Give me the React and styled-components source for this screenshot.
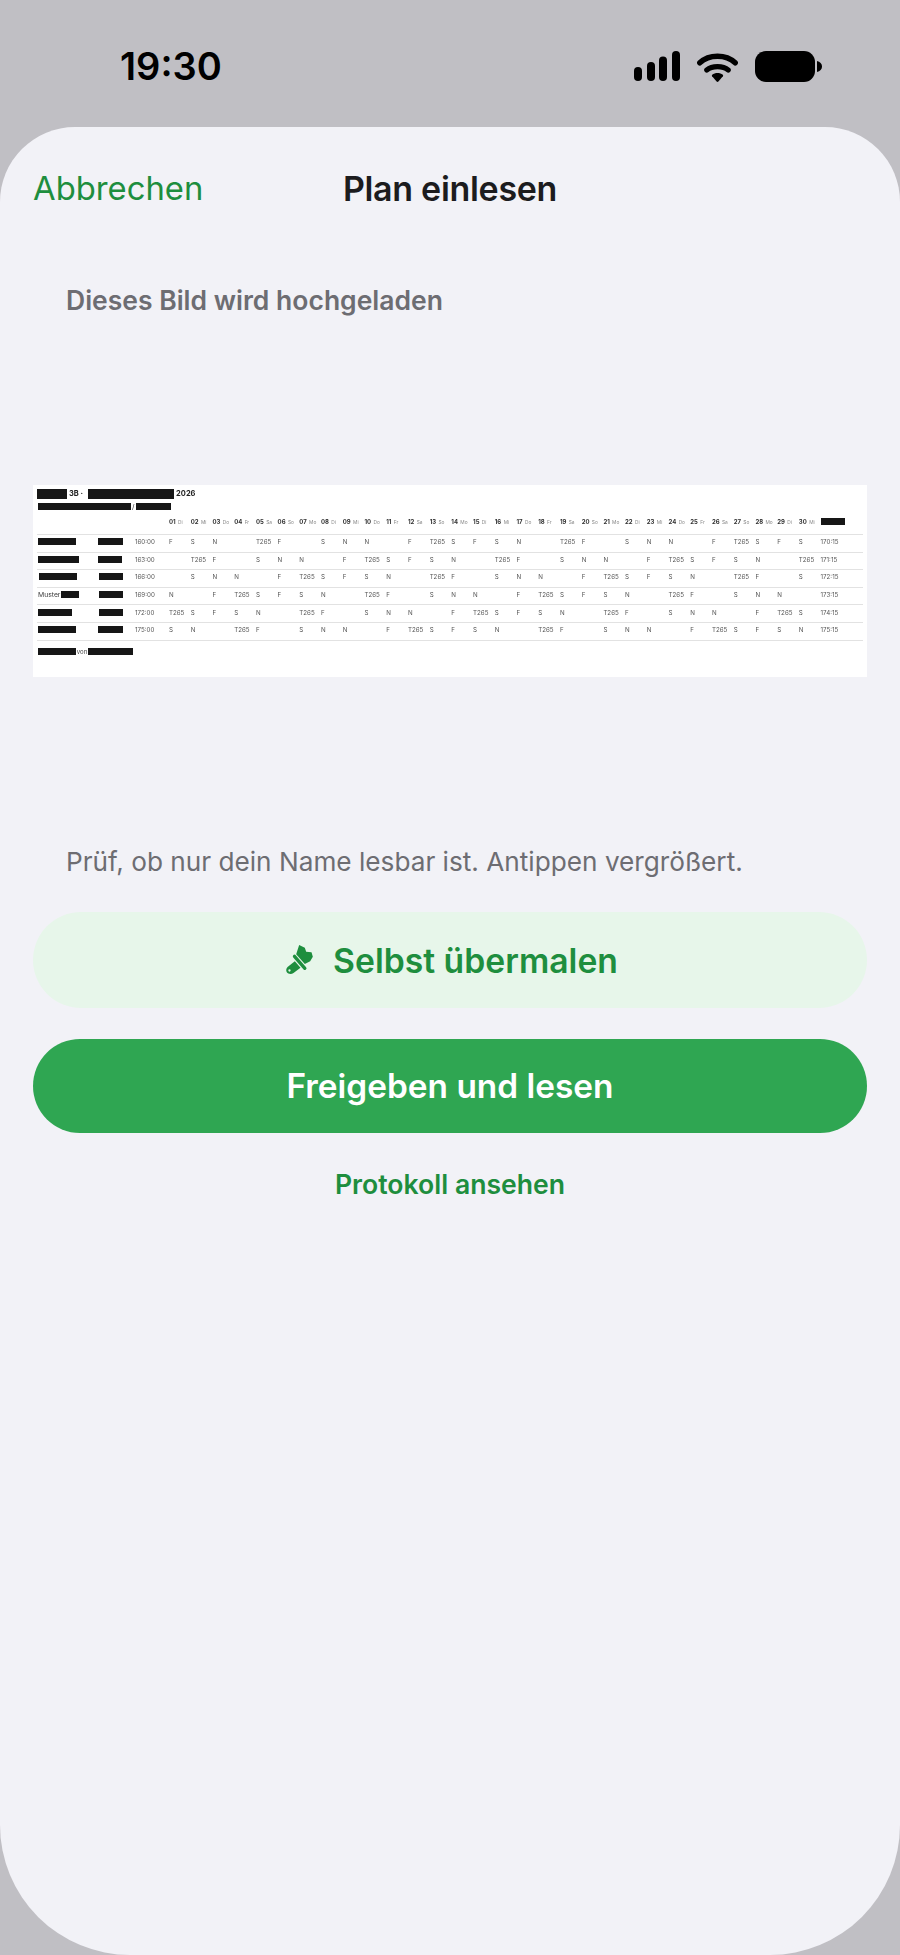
import styled, { createGlobalStyle } from "styled-components"

const green = "#1e8e3e"

const GlobalStyle = createGlobalStyle`
  html, body {
    margin: 0;
    padding: 0;
    background: #c0bfc4;
  }

  * {
    box-sizing: border-box;
  }
`

// Days of the plan, first to thirtieth
const weekdays = ["Di", "Mi", "Do", "Fr", "Sa", "So", "Mo"]
const days = Array.from({ length: 30 }, (_, i) => ({
  num: String(i + 1).padStart(2, "0"),
  name: weekdays[i % 7],
}))

const rows = [
  {
    name: [38, 1],
    group: [0, 25],
    hours: "160:00",
    total: "170:15",
    shifts: "F,S,N,,T265,F,,S,N,N,,F,T265,S,F,S,N,,T265,F,,S,N,N,,F,T265,S,F,S",
  },
  {
    name: [41, 1],
    group: [0, 24],
    hours: "163:00",
    total: "171:15",
    shifts: ",T265,F,,S,N,N,,F,T265,S,F,S,N,,T265,F,,S,N,N,,F,T265,S,F,S,N,,T265",
  },
  {
    name: [38, 2],
    group: [1, 24],
    hours: "166:00",
    total: "172:15",
    shifts: ",S,N,N,,F,T265,S,F,S,N,,T265,F,,S,N,N,,F,T265,S,F,S,N,,T265,F,,S",
  },
  {
    label: "Muster",
    name: [18, 0],
    group: [1, 24],
    hours: "169:00",
    total: "173:15",
    shifts: "N,,F,T265,S,F,S,N,,T265,F,,S,N,N,,F,T265,S,F,S,N,,T265,F,,S,N,N,",
  },
  {
    name: [34, 1],
    group: [1, 24],
    hours: "172:00",
    total: "174:15",
    shifts: "T265,S,F,S,N,,T265,F,,S,N,N,,F,T265,S,F,S,N,,T265,F,,S,N,N,,F,T265,S",
  },
  {
    name: [38, 1],
    group: [0, 25],
    hours: "175:00",
    total: "175:15",
    shifts: "S,N,,T265,F,,S,N,N,,F,T265,S,F,S,N,,T265,F,,S,N,N,,F,T265,S,F,S,N",
  },
]

const SignalIcon = () => (
  <svg width="46" height="30" viewBox="0 0 46 30" fill="#000">
    <rect x="0" y="16" width="8" height="14" rx="4" />
    <rect x="13" y="11" width="8" height="19" rx="4" />
    <rect x="25" y="5.5" width="8" height="24.5" rx="4" />
    <rect x="38" y="0" width="8" height="30" rx="4" />
  </svg>
)

const WifiIcon = () => (
  <svg width="41" height="31" viewBox="0 0 41 31" fill="none">
    <path
      d="M2.8 11.8C12 3 29 3 38.2 11.8"
      stroke="#000"
      strokeWidth="5.4"
      strokeLinecap="round"
    />
    <path
      d="M9.8 19C15 14.6 26 14.6 31.2 19"
      stroke="#000"
      strokeWidth="5.2"
      strokeLinecap="round"
    />
    <path
      d="M15.2 23.8C18 21.4 23 21.4 25.8 23.8C26.2 24.2 26.2 24.8 25.9 25.2L21.4 30.6C20.9 31.1 20.1 31.1 19.6 30.6L15.1 25.2C14.8 24.8 14.8 24.2 15.2 23.8Z"
      fill="#000"
    />
  </svg>
)

const BatteryIcon = () => (
  <svg width="67" height="31" viewBox="0 0 67 31" fill="#000">
    <rect x="0" y="0" width="60" height="31" rx="11" />
    <path d="M62 10C65 10.5 67 12.8 67 15.5C67 18.2 65 20.5 62 21Z" />
  </svg>
)

const BrushIcon = () => (
  <svg width="27" height="30" viewBox="78 75 80 90" fill={green}>
    <path d="M117 75L134 83L138 95L154 97L158 110L150 124L134 132L108 103Z" />
    <path
      d="M103 109L134 145"
      fill="none"
      stroke={green}
      strokeWidth="10"
      strokeLinecap="round"
    />
    <path
      fillRule="evenodd"
      d="M104 124L121 143L100 159C94 164 84 163 80 157C76 150 79 143 85 139ZM88 148A3.5 3.5 0 1 0 88.01 155A3.5 3.5 0 1 0 88 148Z"
    />
  </svg>
)

const PlanPreview = () => (
  <Preview>
    <PlanTitle>
      <Redact $w={30} $h={10} />
      3B ·
      <Redact $w={86} $h={10} $ml={3} />
      2026
    </PlanTitle>
    <PlanSubtitle>
      <Redact $w={93} />/
      <Redact $w={35} />
    </PlanSubtitle>
    <PlanHead>
      <span />
      <span />
      <span />
      {days.map((day) => (
        <Day key={day.num}>
          <b>{day.num}</b> {day.name}
        </Day>
      ))}
      <Redact $w={24} />
    </PlanHead>
    <PlanBody>
      {rows.map((row) => (
        <PlanRow key={row.hours}>
          <Cell>
            {row.label && <SampleName>{row.label}</SampleName>}
            <Redact $w={row.name[0]} $ml={row.name[1]} />
          </Cell>
          <Cell>
            <Redact $w={row.group[1]} $ml={row.group[0]} />
          </Cell>
          <Cell>{row.hours}</Cell>
          {row.shifts.split(",").map((shift, i) => (
            <Cell key={i}>{shift}</Cell>
          ))}
          <Cell>{row.total}</Cell>
        </PlanRow>
      ))}
    </PlanBody>
    <PlanFooter>
      <Redact $w={38} $ml={1} />
      <FooterWord>von</FooterWord>
      <Redact $w={45} />
    </PlanFooter>
  </Preview>
)

export default function App() {
  return (
    <>
      <GlobalStyle />
      <Page>
        <StatusBar>
          <Time>19:30</Time>
          <StatusIcons>
            <SignalIcon />
            <WifiIcon />
            <BatteryIcon />
          </StatusIcons>
        </StatusBar>
        <Sheet>
          <Nav>
            <Cancel>Abbrechen</Cancel>
            <Title>Plan einlesen</Title>
          </Nav>
          <SectionLabel>Dieses Bild wird hochgeladen</SectionLabel>
          <PlanPreview />
          <Caption>Prüf, ob nur dein Name lesbar ist. Antippen vergrößert.</Caption>
          <SoftButton>
            <BrushIcon />
            Selbst übermalen
          </SoftButton>
          <SolidButton>Freigeben und lesen</SolidButton>
          <TextLink>Protokoll ansehen</TextLink>
        </Sheet>
      </Page>
    </>
  )
}

const Page = styled.div`
  width: 900px;
  height: 1955px;
  display: flex;
  flex-direction: column;
  background: #c0bfc4;
  font-family: Inter, "Liberation Sans", sans-serif;
`

const StatusBar = styled.div`
  height: 127px;
  flex: none;
  display: flex;
  align-items: center;
  justify-content: space-between;
  padding: 5px 78px 0 120px;
`

const Time = styled.div`
  font-size: 38px;
  font-weight: 600;
  color: #000;
`

const StatusIcons = styled.div`
  display: flex;
  align-items: center;
  gap: 17px;
`

const Sheet = styled.div`
  flex: 1;
  display: flex;
  flex-direction: column;
  padding: 0 33px;
  background: #f2f2f7;
  border-radius: 75px 75px 130px 130px;
`

const Nav = styled.div`
  height: 50px;
  margin-top: 36px;
  display: grid;
  grid-template-columns: 1fr auto 1fr;
  align-items: center;
`

const Cancel = styled.div`
  font-size: 32.8px;
  color: ${green};
`

const Title = styled.div`
  font-size: 34px;
  font-weight: 600;
  letter-spacing: -0.3px;
  color: #1c1c1e;
`

const SectionLabel = styled.div`
  margin-top: 71px;
  padding-left: 33px;
  font-size: 26.5px;
  line-height: 32px;
  font-weight: 600;
  color: #6d6d72;
`

const Preview = styled.div`
  height: 192px;
  margin-top: 169px;
  padding: 3px 4px 0;
  background: #fff;
  color: #555;
  font-size: 6px;
  filter: blur(0.3px);
  overflow: hidden;
`

const Redact = styled.i`
  display: inline-block;
  flex: none;
  width: ${({ $w }) => $w}px;
  height: ${({ $h }) => $h || 7}px;
  margin-left: ${({ $ml }) => $ml || 0}px;
  background: #161616;
`

const PlanTitle = styled.div`
  height: 11px;
  display: flex;
  align-items: center;
  gap: 2px;
  font-size: 7.5px;
  font-weight: 700;
  color: #222;
`

const PlanSubtitle = styled.div`
  height: 8px;
  margin-top: 3px;
  padding-left: 1px;
  display: flex;
  align-items: center;
  gap: 1px;
  font-size: 7px;
  color: #333;
`

const columns = "61px 37px 34px repeat(30, 21.73px) 1fr"

const PlanHead = styled.div`
  height: 10px;
  margin: 6px 0 8px;
  display: grid;
  grid-template-columns: ${columns};
  align-items: center;
`

const Day = styled.span`
  font-size: 4.8px;
  color: #888;
  white-space: nowrap;

  b {
    font-size: 6px;
    font-weight: 700;
    color: #333;
    margin-right: 1px;
  }
`

const PlanBody = styled.div`
  border-top: 1px solid #e2e2e2;
`

const PlanRow = styled.div`
  height: 17.6px;
  padding-bottom: 3px;
  display: grid;
  grid-template-columns: ${columns};
  align-items: center;
  border-bottom: 1px solid #e2e2e2;
`

const Cell = styled.span`
  display: flex;
  align-items: center;
  white-space: nowrap;
  font-size: 6.2px;
  color: #555;
`

const SampleName = styled.span`
  width: 23px;
  margin-left: 1px;
  font-size: 6.8px;
  color: #3a3a3a;
`

const PlanFooter = styled.div`
  height: 8px;
  margin-top: 7px;
  display: flex;
  align-items: center;
  font-size: 6px;
  color: #444;
`

const FooterWord = styled.span`
  width: 12px;
  text-align: center;
`

const Caption = styled.div`
  margin-top: 169px;
  padding-left: 33px;
  font-size: 26.2px;
  line-height: 32px;
  color: #6d6d72;
`

const SoftButton = styled.div`
  height: 96px;
  margin-top: 34px;
  padding-left: 4px;
  display: flex;
  align-items: center;
  justify-content: center;
  gap: 20px;
  border-radius: 48px;
  background: #e7f6ea;
  color: ${green};
  font-size: 33.7px;
  font-weight: 600;
`

const SolidButton = styled.div`
  height: 94px;
  margin-top: 31px;
  display: flex;
  align-items: center;
  justify-content: center;
  border-radius: 47px;
  background: #2fa652;
  color: #fff;
  font-size: 33.4px;
  font-weight: 600;
`

const TextLink = styled.div`
  margin-top: 35px;
  text-align: center;
  font-size: 26.6px;
  line-height: 32px;
  font-weight: 600;
  color: ${green};
`
